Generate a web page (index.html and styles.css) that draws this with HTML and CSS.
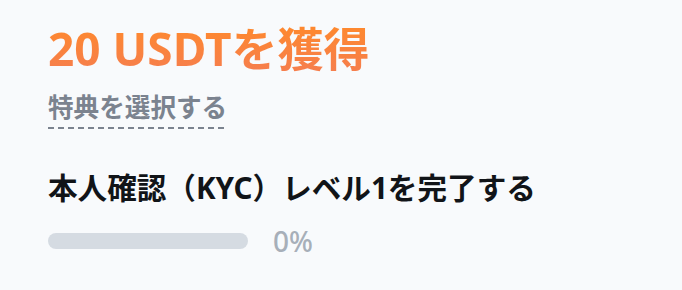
FILE: index.html
```html
<!DOCTYPE html>
<html lang="ja">
<head>
<meta charset="utf-8">
<link rel="stylesheet" href="styles.css">
</head>
<body>
<div class="card">
  <h1 class="title">20 USDTを獲得</h1>
  <div class="choose"><span class="choose-text">特典を選択する</span></div>
  <div class="task">本人確認（KYC）レベル1を完了する</div>
  <div class="progress">
    <div class="bar"><div class="fill" style="width:0%"></div></div>
    <span class="pct">0%</span>
  </div>
</div>
</body>
</html>
```
FILE: styles.css
```css
html, body {
  margin: 0;
  padding: 0;
  background: #f8fafc;
}
body {
  font-family: "Noto Sans", "Noto Sans CJK JP", sans-serif;
  width: 682px;
  height: 290px;
  overflow: hidden;
}
.card {
  padding: 20px 48px 0 48px;
  display: flex;
  flex-direction: column;
  align-items: flex-start;
}
.title {
  margin: 0;
  font-size: 46px;
  line-height: 56px;
  font-weight: 700;
  background: linear-gradient(180deg, #ff8a2a 0%, #f57d50 100%);
  -webkit-background-clip: text;
  background-clip: text;
  color: transparent;
}
.choose {
  margin-top: 15px;
  padding-bottom: 4px;
  background-image: repeating-linear-gradient(90deg, #7b838f 0 6px, transparent 6px 10px);
  background-size: 100% 2px;
  background-repeat: no-repeat;
  background-position: left bottom;
  line-height: 0;
}
.choose-text {
  display: inline-block;
  font-size: 25.6px;
  line-height: 34px;
  font-weight: 700;
  color: #7b838f;
}
.task {
  margin-top: 39px;
  font-size: 29.6px;
  line-height: 40px;
  font-weight: 700;
  color: #111418;
}
.progress {
  margin-top: 15px;
  height: 36px;
  display: flex;
  align-items: center;
  gap: 25px;
}
.bar {
  width: 200px;
  height: 16px;
  border-radius: 8px;
  background: #d5dbe2;
  overflow: hidden;
}
.fill {
  height: 100%;
  background: #ff8a2a;
}
.pct {
  font-size: 28px;
  line-height: 36px;
  color: #a7afb9;
  font-weight: 500;
}
```
